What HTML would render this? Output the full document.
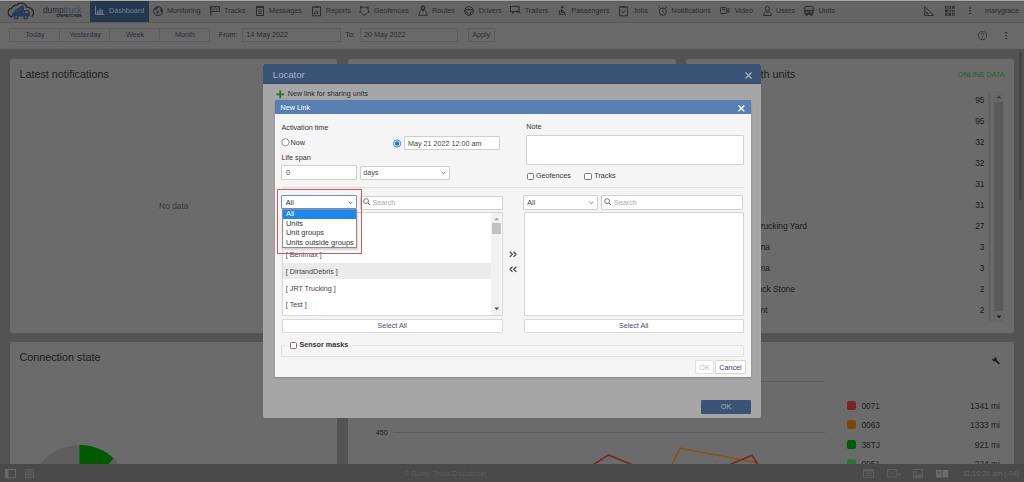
<!DOCTYPE html>
<html><head><meta charset="utf-8">
<style>
*{box-sizing:border-box;margin:0;padding:0}
html,body{width:1024px;height:482px;overflow:hidden;background:#535353;font-family:"Liberation Sans",sans-serif;position:relative}
.a{position:absolute}
.t{position:absolute;white-space:nowrap;line-height:1}
svg{position:absolute;overflow:visible}
</style></head><body>
<div class="a" style="left:0px;top:0px;width:1024px;height:22px;background:#646464;"></div>
<div class="a" style="left:0px;top:1px;width:1024px;height:1px;background:#5c5c5c;"></div>
<div class="a" style="left:0px;top:0px;width:1024px;height:1px;background:#a8aaa8;"></div>
<div class="a" style="left:0px;top:22px;width:1024px;height:1px;background:#585858;"></div>
<div class="a" style="left:90px;top:1px;width:59px;height:21px;background:#25374f;"></div>
<div class="t" style="left:167px;top:7.31px;font-size:7.2px;color:#2c2c2c;font-weight:400;">Monitoring</div>
<div class="t" style="left:224px;top:7.31px;font-size:7.2px;color:#2c2c2c;font-weight:400;">Tracks</div>
<div class="t" style="left:269px;top:7.31px;font-size:7.2px;color:#2c2c2c;font-weight:400;">Messages</div>
<div class="t" style="left:325.7px;top:7.31px;font-size:7.2px;color:#2c2c2c;font-weight:400;">Reports</div>
<div class="t" style="left:374px;top:7.31px;font-size:7.2px;color:#2c2c2c;font-weight:400;">Geofences</div>
<div class="t" style="left:432px;top:7.31px;font-size:7.2px;color:#2c2c2c;font-weight:400;">Routes</div>
<div class="t" style="left:478.8px;top:7.31px;font-size:7.2px;color:#2c2c2c;font-weight:400;">Drivers</div>
<div class="t" style="left:524.7px;top:7.31px;font-size:7.2px;color:#2c2c2c;font-weight:400;">Trailers</div>
<div class="t" style="left:571.5px;top:7.31px;font-size:7.2px;color:#2c2c2c;font-weight:400;">Passengers</div>
<div class="t" style="left:633px;top:7.31px;font-size:7.2px;color:#2c2c2c;font-weight:400;">Jobs</div>
<div class="t" style="left:671.6px;top:7.31px;font-size:7.2px;color:#2c2c2c;font-weight:400;">Notifications</div>
<div class="t" style="left:734.7px;top:7.31px;font-size:7.2px;color:#2c2c2c;font-weight:400;">Video</div>
<div class="t" style="left:776px;top:7.31px;font-size:7.2px;color:#2c2c2c;font-weight:400;">Users</div>
<div class="t" style="left:818.4px;top:7.31px;font-size:7.2px;color:#2c2c2c;font-weight:400;">Units</div>
<div class="t" style="left:985px;top:7.31px;font-size:7.2px;color:#2c2c2c;font-weight:400;">marygrace</div>
<div class="t" style="left:109px;top:7.31px;font-size:7.2px;color:#7a8494;font-weight:400;">Dashboard</div>
<svg style="left:95px;top:6px" width="10" height="9" viewBox="0 0 10 9"><path d="M0.5 0.3V8.4H9.5" stroke="#7a8494" stroke-width="0.9" fill="none"/><rect x="2.2" y="4.5" width="1.2" height="3.5" fill="#7a8494"/><rect x="4.4" y="2.5" width="1.2" height="5.5" fill="#7a8494"/><rect x="6.6" y="3.8" width="1.2" height="4.2" fill="#7a8494"/></svg>
<svg style="left:153px;top:5.5px" width="11" height="11" viewBox="0 0 11 11"><circle cx="5.1" cy="5.2" r="4.4" stroke="#2e2e2e" stroke-width="1.1" fill="none"/><path d="M1.5 3.2 C2.3 1.6 3.6 0.9 5 0.9 L5.8 1.6 L4.6 2.6 L3.8 3.6 L2.2 4 Z" fill="#2e2e2e"/><path d="M3.4 5.2 L5 4.6 L6 5.6 L5.4 7.2 L4.6 8.6 L4 7 Z" fill="#2e2e2e"/><path d="M7.6 2 C8.8 3 9.4 4.2 9.4 5.4 L8.4 6.4 L7.8 5.2 L7 4.2 Z" fill="#2e2e2e"/></svg>
<svg style="left:210px;top:6px" width="10" height="10" viewBox="0 0 10 10"><rect x="0.2" y="0" width="1.1" height="9.6" fill="#2e2e2e"/><rect x="0.8" y="0.5" width="8.6" height="5" stroke="#2e2e2e" stroke-width="0.9" fill="none"/><path d="M1.3 1h1.6v1.6h-1.6zM4.5 1h1.6v1.6h-1.6zM2.9 2.6h1.6v1.7h-1.6zM6.1 2.6h1.6v1.7h-1.6z" fill="#3e3e3e"/><path d="M7.7 1h1.2v1.6h-1.2z" fill="#3e3e3e"/></svg>
<svg style="left:256px;top:6px" width="8" height="10" viewBox="0 0 8 10"><rect x="0.5" y="0.5" width="7" height="9" stroke="#2e2e2e" stroke-width="1" fill="none"/><rect x="0.5" y="0.5" width="7" height="1.5" fill="#2e2e2e"/><path d="M2 4h4M2 5.8h4M2 7.6h4" stroke="#2e2e2e" stroke-width="0.8"/></svg>
<svg style="left:312px;top:6px" width="9" height="10" viewBox="0 0 9 10"><rect x="0.5" y="1" width="8" height="8.8" stroke="#2e2e2e" stroke-width="1" fill="none"/><rect x="2.5" y="0" width="4" height="1.6" fill="#2e2e2e"/><path d="M2.5 8V6.5M4 8V4.5M5.5 8V5.5" stroke="#2e2e2e" stroke-width="1"/></svg>
<svg style="left:359px;top:6px" width="11" height="10" viewBox="0 0 11 10"><path d="M2.2 1.1 L8.5 1.4 L9.9 5.8 L5.4 9.3 L1.1 5.8 Z" stroke="#2e2e2e" stroke-width="0.8" fill="none"/><rect x="1.2" y="0.2" width="2" height="2" fill="#2e2e2e"/><rect x="7.5" y="0.5" width="2" height="2" fill="#2e2e2e"/><path d="M9.9 4.6l1 2h-2z M5.4 8.3l1 1.5h-2z M1.1 4.6l1 2h-2z" fill="#2e2e2e"/></svg>
<svg style="left:418px;top:5px" width="11" height="11" viewBox="0 0 11 11"><path d="M5 0.6 C3.2 0.6 2.6 2 2.6 3 C2.6 4.3 5 7 5 7 C5 7 7.4 4.3 7.4 3 C7.4 2 6.8 0.6 5 0.6Z" fill="#2e2e2e"/><circle cx="5" cy="3" r="0.9" fill="#6a6a6a"/><path d="M2.5 5.2 L0.5 10.3 H9.5 L7.5 5.2" stroke="#2e2e2e" stroke-width="0.9" fill="none"/></svg>
<svg style="left:464px;top:6px" width="10" height="10" viewBox="0 0 10 10"><circle cx="5" cy="5" r="4.4" stroke="#2e2e2e" stroke-width="1" fill="none"/><path d="M1 4.2 Q5 2.6 9 4.2" stroke="#2e2e2e" stroke-width="1.2" fill="none"/><path d="M1.3 6 L3.5 6.2 L4 8.8 M8.7 6 L6.5 6.2 L6 8.8" stroke="#2e2e2e" stroke-width="1" fill="none"/></svg>
<svg style="left:510px;top:6px" width="11" height="9" viewBox="0 0 11 9"><rect x="0.5" y="0.5" width="8.5" height="5" stroke="#2e2e2e" stroke-width="1" fill="none"/><path d="M2 5.5 L3 7.5 L4 5.5 M5.5 5.5 H9.5 V7 H10.5" stroke="#2e2e2e" stroke-width="1" fill="none"/><rect x="6" y="4.5" width="3" height="2" fill="#2e2e2e"/></svg>
<svg style="left:558px;top:6px" width="9" height="10" viewBox="0 0 9 10"><circle cx="4.3" cy="1.3" r="1.2" fill="#2e2e2e"/><path d="M3.3 3 L3.5 6.5 H6.5 L7.5 9.5 M1.2 4 L1.8 8.3 H5.5 M3.5 4 L5.8 5.2" stroke="#2e2e2e" stroke-width="1.1" fill="none"/></svg>
<svg style="left:619px;top:6px" width="9" height="10" viewBox="0 0 9 10"><rect x="0.5" y="1" width="8" height="8.8" stroke="#2e2e2e" stroke-width="1" fill="none"/><rect x="2.5" y="0" width="4" height="1.6" fill="#2e2e2e"/><path d="M2.5 5.5 L4 7 L6.5 4" stroke="#2e2e2e" stroke-width="0.9" fill="none"/></svg>
<svg style="left:658px;top:6px" width="10" height="10" viewBox="0 0 10 10"><circle cx="4.8" cy="5.6" r="3.6" stroke="#2e2e2e" stroke-width="1" fill="none"/><path d="M4.8 3.5V5.8L6 7" stroke="#2e2e2e" stroke-width="0.8" fill="none"/><path d="M0.5 1.8 L2 0.5 M9.1 1.8 L7.6 0.5 M2 9.6 L2.8 8.6 M7.6 9.6 L6.8 8.6" stroke="#2e2e2e" stroke-width="1" fill="none"/></svg>
<svg style="left:720px;top:7px" width="10" height="7" viewBox="0 0 10 7"><rect x="0.5" y="0.5" width="6.2" height="6" rx="1" stroke="#2e2e2e" stroke-width="1" fill="none"/><rect x="1.8" y="1.8" width="3.6" height="1" fill="#2e2e2e"/><path d="M8 1.5 V5.5 M9 1 V6" stroke="#2e2e2e" stroke-width="0.8"/></svg>
<svg style="left:763px;top:6px" width="9" height="10" viewBox="0 0 9 10"><ellipse cx="4.5" cy="2.6" rx="2" ry="2.2" stroke="#2e2e2e" stroke-width="1" fill="none"/><path d="M0.6 9.5 C0.6 6.5 2.5 5.6 3.3 5.6 L4.5 7 L5.7 5.6 C6.5 5.6 8.4 6.5 8.4 9.5 Z" stroke="#2e2e2e" stroke-width="1" fill="none"/></svg>
<svg style="left:804px;top:6px" width="10" height="10" viewBox="0 0 10 10"><rect x="0.8" y="0.5" width="8.4" height="7.5" rx="1" stroke="#2e2e2e" stroke-width="1" fill="none"/><rect x="1" y="3.8" width="8" height="1.2" fill="#2e2e2e"/><rect x="1" y="5.5" width="8" height="3" fill="#2e2e2e"/><rect x="1.5" y="8" width="2" height="1.8" fill="#2e2e2e"/><rect x="6.5" y="8" width="2" height="1.8" fill="#2e2e2e"/><rect x="2" y="6.2" width="1.4" height="1" fill="#6a6a6a"/><rect x="6.6" y="6.2" width="1.4" height="1" fill="#6a6a6a"/><path d="M0 2.5V5M10 2.5V5" stroke="#2e2e2e" stroke-width="0.6"/></svg>
<svg style="left:924px;top:6px" width="10" height="10" viewBox="0 0 10 10"><path d="M0.7 0.5 V9.4 H9.5 Z" stroke="#2e2e2e" stroke-width="1" fill="none"/><path d="M0.7 4.5h1.2M0.7 6.5h1.2M2.8 6 L4.5 7.8 H2.8Z" stroke="#2e2e2e" stroke-width="0.7" fill="#2e2e2e"/></svg>
<svg style="left:945px;top:6px" width="10" height="10" viewBox="0 0 10 10"><rect x="0.4" y="0.4" width="1.9" height="1.9" stroke="#2e2e2e" stroke-width="0.7" fill="none"/><rect x="3.9" y="0.4" width="1.9" height="1.9" stroke="#2e2e2e" stroke-width="0.7" fill="none"/><rect x="7.0" y="0.0" width="2.6" height="2.6" fill="#2e2e2e"/><rect x="0.0" y="3.6" width="2.6" height="2.6" fill="#2e2e2e"/><rect x="3.9" y="4.0" width="1.9" height="1.9" stroke="#2e2e2e" stroke-width="0.7" fill="none"/><rect x="7.4" y="4.0" width="1.9" height="1.9" stroke="#2e2e2e" stroke-width="0.7" fill="none"/><rect x="0.0" y="7.2" width="2.6" height="2.6" fill="#2e2e2e"/><rect x="3.5" y="7.2" width="2.6" height="2.6" fill="#2e2e2e"/><rect x="7.4" y="7.6000000000000005" width="1.9" height="1.9" stroke="#2e2e2e" stroke-width="0.7" fill="none"/></svg>
<svg style="left:969px;top:7px" width="3" height="8" viewBox="0 0 3 8"><rect x="0.3" y="0.5" width="1.6" height="1.3" fill="#2e2e2e"/><rect x="0.3" y="3.1" width="1.6" height="1.3" fill="#2e2e2e"/><rect x="0.3" y="5.8" width="1.6" height="1.3" fill="#2e2e2e"/></svg>
<svg style="left:5px;top:1px" width="32" height="20" viewBox="0 0 32 20"><path d="M7.5 15.8 C4.8 15.5 3 13.5 3.2 11 C3.4 8.8 5 7.5 6.8 7.3 C7.8 5 9.8 3.8 11.8 4.2 C13 2.6 14.8 2 16.5 2.1 C19.2 2.3 21.2 4.3 21.6 6.5 C22.5 6.1 23.5 6.2 24.3 6.6 C27 7.5 28.6 10 28.4 12.5 C28.2 14 27.5 15 26.5 15.5" stroke="#222" stroke-width="1.2" fill="none"/><path d="M6.8 13 L10.5 8.6 L17.6 4.3 L19.2 5.2 L18.4 13 Z" fill="#26395a"/><path d="M19 8.9 H23.2 L25 11 V15.4 H7 V12.4 H19Z" fill="#26395a"/><rect x="20.3" y="10" width="2.6" height="2.2" fill="#55657a"/><circle cx="11.2" cy="16.2" r="2.4" fill="#26395a"/><circle cx="20.7" cy="16.2" r="2.4" fill="#26395a"/><circle cx="11.2" cy="16.2" r="0.9" fill="#6a6a6a"/><circle cx="20.7" cy="16.2" r="0.9" fill="#6a6a6a"/><path d="M9 11 L16 7 M8.5 12 L17 8" stroke="#44597a" stroke-width="0.4"/></svg>
<div class="t" style="left:43px;top:6.3px;font-size:8.3px;letter-spacing:-0.05px;color:#262a30">dump<span style="color:#34496a">truck</span></div>
<div class="t" style="left:56.5px;top:13.6px;font-size:4px;font-weight:700;color:#1e1e1e">DISPATCHER</div>
<div class="a" style="left:0px;top:23px;width:1024px;height:26px;background:#696969;"></div>
<div class="a" style="left:9px;top:27.5px;width:201px;height:14.5px;background:#696969;border:1px solid #5d5d5d;border-radius:1px"></div>
<div class="a" style="left:59px;top:28px;width:1px;height:14px;background:#5d5d5d;"></div>
<div class="a" style="left:109px;top:28px;width:1px;height:14px;background:#5d5d5d;"></div>
<div class="a" style="left:159px;top:28px;width:1px;height:14px;background:#5d5d5d;"></div>
<div class="t" style="left:-165px;width:400px;text-align:center;top:31.21px;font-size:7.2px;color:#2e2e3c;font-weight:400;">Today</div>
<div class="t" style="left:-115px;width:400px;text-align:center;top:31.21px;font-size:7.2px;color:#2e2e3c;font-weight:400;">Yesterday</div>
<div class="t" style="left:-65px;width:400px;text-align:center;top:31.21px;font-size:7.2px;color:#2e2e3c;font-weight:400;">Week</div>
<div class="t" style="left:-15px;width:400px;text-align:center;top:31.21px;font-size:7.2px;color:#2e2e3c;font-weight:400;">Month</div>
<div class="t" style="left:218.8px;top:31.41px;font-size:7.2px;color:#262626;font-weight:400;">From:</div>
<div class="a" style="left:242px;top:27.8px;width:99px;height:14.3px;background:#696969;border:1px solid #5d5d5d"></div>
<div class="t" style="left:246.5px;top:31.41px;font-size:7.2px;color:#2c2c2c;font-weight:400;">14 May 2022</div>
<div class="t" style="left:345.3px;top:31.41px;font-size:7.2px;color:#262626;font-weight:400;">To:</div>
<div class="a" style="left:360px;top:27.8px;width:98px;height:14.3px;background:#696969;border:1px solid #5d5d5d"></div>
<div class="t" style="left:364px;top:31.41px;font-size:7.2px;color:#2c2c2c;font-weight:400;">20 May 2022</div>
<div class="a" style="left:467.8px;top:27.8px;width:27px;height:14.3px;background:#696969;border:1px solid #5d5d5d;border-radius:1px"></div>
<div class="t" style="left:281.2px;width:400px;text-align:center;top:31.21px;font-size:7.2px;color:#2e2e3c;font-weight:400;">Apply</div>
<svg style="left:978px;top:31px" width="10" height="10" viewBox="0 0 10 10"><circle cx="4.5" cy="4.6" r="4.1" stroke="#2e2e2e" stroke-width="0.8" fill="none"/><path d="M3.1 3.5 C3.1 2.6 3.7 2.1 4.5 2.1 C5.3 2.1 5.9 2.6 5.9 3.4 C5.9 4.3 4.6 4.5 4.6 5.6" stroke="#2e2e2e" stroke-width="0.8" fill="none"/><rect x="4.1" y="6.3" width="0.9" height="0.9" fill="#2e2e2e"/></svg>
<svg style="left:1005px;top:32px" width="3" height="8" viewBox="0 0 3 8"><rect x="0.3" y="0" width="1.6" height="1.4" fill="#2a2a3a"/><rect x="0.3" y="2.9" width="1.6" height="1.4" fill="#2a2a3a"/><rect x="0.3" y="5.8" width="1.6" height="1.4" fill="#2a2a3a"/></svg>
<div class="a" style="left:10px;top:59px;width:327px;height:274px;background:#6b6b6b;border-radius:2px"></div>
<div class="a" style="left:348px;top:59px;width:328px;height:274px;background:#6b6b6b;border-radius:2px"></div>
<div class="a" style="left:686px;top:59px;width:328px;height:274px;background:#6b6b6b;border-radius:2px"></div>
<div class="a" style="left:10px;top:342px;width:327px;height:140px;background:#6b6b6b;border-radius:2px"></div>
<div class="a" style="left:348px;top:342px;width:666px;height:140px;background:#6b6b6b;border-radius:2px"></div>
<div class="a" style="left:1019px;top:52px;width:3px;height:148px;background:#464646;border-radius:1.5px"></div>
<div class="t" style="left:19.4px;top:69.06px;font-size:10.8px;color:#1d1d1d;font-weight:400;">Latest notifications</div>
<div class="t" style="left:159.1px;top:202.39px;font-size:8.4px;color:#393939;font-weight:400;">No data</div>
<div class="t" style="right:228.60000000000002px;top:68.86px;font-size:10.8px;color:#1d1d1d;font-weight:400;">Geofences with units</div>
<div class="t" style="left:957.8px;top:71.01px;font-size:7.2px;color:#2c5c2c;font-weight:400;">ONLINE DATA</div>
<div class="t" style="right:39.5px;top:96.39px;font-size:8.4px;color:#1a1a1a;font-weight:400;">95</div>
<div class="t" style="right:39.5px;top:117.39px;font-size:8.4px;color:#1a1a1a;font-weight:400;">95</div>
<div class="t" style="right:39.5px;top:138.39px;font-size:8.4px;color:#1a1a1a;font-weight:400;">32</div>
<div class="t" style="right:39.5px;top:159.39px;font-size:8.4px;color:#1a1a1a;font-weight:400;">32</div>
<div class="t" style="right:39.5px;top:180.39px;font-size:8.4px;color:#1a1a1a;font-weight:400;">31</div>
<div class="t" style="right:39.5px;top:201.39px;font-size:8.4px;color:#1a1a1a;font-weight:400;">31</div>
<div class="t" style="right:39.5px;top:222.39px;font-size:8.4px;color:#1a1a1a;font-weight:400;">27</div>
<div class="t" style="right:217.10000000000002px;top:222.39px;font-size:8.4px;color:#1a1a1a;font-weight:400;">Pinellas Trucking Yard</div>
<div class="t" style="right:39.5px;top:243.39px;font-size:8.4px;color:#1a1a1a;font-weight:400;">3</div>
<div class="t" style="right:254px;top:243.39px;font-size:8.4px;color:#1a1a1a;font-weight:400;">Lakeland Arena</div>
<div class="t" style="right:39.5px;top:264.39px;font-size:8.4px;color:#1a1a1a;font-weight:400;">3</div>
<div class="t" style="right:254px;top:264.39px;font-size:8.4px;color:#1a1a1a;font-weight:400;">Tampa Arena</div>
<div class="t" style="right:39.5px;top:285.39px;font-size:8.4px;color:#1a1a1a;font-weight:400;">2</div>
<div class="t" style="right:229.10000000000002px;top:285.39px;font-size:8.4px;color:#1a1a1a;font-weight:400;">Black Stone</div>
<div class="t" style="right:39.5px;top:306.39px;font-size:8.4px;color:#1a1a1a;font-weight:400;">2</div>
<div class="t" style="right:256.5px;top:306.39px;font-size:8.4px;color:#1a1a1a;font-weight:400;">Main Point</div>
<div class="a" style="left:988.3px;top:93px;width:2.5px;height:227.5px;background:#626262;"></div>
<div class="a" style="left:993.3px;top:91px;width:10.8px;height:231.3px;background:#676767;"></div>
<div class="a" style="left:994px;top:102px;width:9px;height:209px;background:#5a5a5a;"></div>
<svg style="left:995.5px;top:94.5px" width="6" height="4" viewBox="0 0 6 4"><path d="M0.5 3.2 L3 0.6 L5.5 3.2Z" fill="#3a3a3a"/></svg>
<svg style="left:995.5px;top:315px" width="6" height="4" viewBox="0 0 6 4"><path d="M0.5 0.6 L3 3.2 L5.5 0.6Z" fill="#1e1e1e"/></svg>
<div class="t" style="left:19.4px;top:352.16px;font-size:10.8px;color:#1d1d1d;font-weight:400;">Connection state</div>
<svg style="left:0;top:420px" width="200" height="44" viewBox="0 420 200 44"><circle cx="79.5" cy="495" r="50" fill="#5e5e5e"/><path d="M79.5 495 L79.5 445 A50 50 0 0 1 113.7 458.5 Z" fill="#005a00"/></svg>
<div class="t" style="left:375.8px;top:429.21px;font-size:7.2px;color:#1e1e1e;font-weight:400;">450</div>
<div class="a" style="left:393px;top:432px;width:432px;height:1px;background:#5c5c5c;"></div>
<div class="a" style="left:761px;top:381px;width:64px;height:1px;background:#5c5c5c;"></div>
<svg style="left:0;top:0" width="1024" height="464" viewBox="0 0 1024 464"><polyline points="593.7,464.5 608.4,455 631.8,464.5" stroke="#7c2620" stroke-width="1.6" fill="none"/><polyline points="672,464.5 680.2,448.1 753.5,461.9 757,464" stroke="#8c5212" stroke-width="1.6" fill="none"/><polyline points="730,464.5 752,455.2 758,464.5" stroke="#7c2620" stroke-width="1.6" fill="none"/></svg>
<svg style="left:990px;top:354px" width="12" height="12" viewBox="0 0 12 12"><path d="M5.6 6.2 L8.8 9.4" stroke="#1e1e1e" stroke-width="1.8" stroke-linecap="round"/><circle cx="4.6" cy="5.2" r="2.2" fill="#1e1e1e"/><path d="M2 3.6 L3.5 2.1 L5.2 3.8 L3.7 5.3Z" fill="#6b6b6b"/></svg>
<div class="a" style="left:847.2px;top:401.2px;width:9px;height:9px;background:#7a2420;border-radius:2px"></div>
<div class="t" style="left:861.4px;top:402.09px;font-size:8.4px;color:#1e1e1e;font-weight:400;">0071</div>
<div class="t" style="right:24.100000000000023px;top:402.09px;font-size:8.4px;color:#1e1e1e;font-weight:400;">1341 mi</div>
<div class="a" style="left:847.2px;top:420.4px;width:9px;height:9px;background:#7a460e;border-radius:2px"></div>
<div class="t" style="left:861.4px;top:421.39px;font-size:8.4px;color:#1e1e1e;font-weight:400;">0063</div>
<div class="t" style="right:24.100000000000023px;top:421.39px;font-size:8.4px;color:#1e1e1e;font-weight:400;">1333 mi</div>
<div class="a" style="left:847.2px;top:439.59999999999997px;width:9px;height:9px;background:#006000;border-radius:2px"></div>
<div class="t" style="left:861.4px;top:440.69px;font-size:8.4px;color:#1e1e1e;font-weight:400;">38TJ</div>
<div class="t" style="right:24.100000000000023px;top:440.69px;font-size:8.4px;color:#1e1e1e;font-weight:400;">921 mi</div>
<div class="a" style="left:847.2px;top:458.79999999999995px;width:9px;height:9px;background:#2a762a;border-radius:2px"></div>
<div class="t" style="left:861.4px;top:459.99px;font-size:8.4px;color:#1e1e1e;font-weight:400;">0051</div>
<div class="t" style="right:24.100000000000023px;top:459.99px;font-size:8.4px;color:#1e1e1e;font-weight:400;">224 mi</div>
<div class="a" style="left:0px;top:464px;width:1024px;height:18px;background:#4a4a4a;"></div>
<svg style="left:5px;top:469px" width="11" height="9" viewBox="0 0 11 9"><rect x="0.5" y="0.5" width="10" height="8.3" stroke="#6a6a6a" stroke-width="0.9" fill="none"/><rect x="0.5" y="0.5" width="3" height="8.3" fill="#6a6a6a"/></svg>
<svg style="left:25px;top:469px" width="9" height="9" viewBox="0 0 9 9"><path d="M0 0.5H9M0 3.2H9M0 5.9H9M0 8.6H9M0.5 0V9M3.2 0V9M5.9 0V9M8.5 0V9" stroke="#5f5f5f" stroke-width="0.9"/></svg>
<div class="t" style="left:404.3px;top:469.81px;font-size:7.2px;color:#5d5d5d;font-weight:400;">© Dump Truck Dispatcher</div>
<svg style="left:863px;top:469px" width="11" height="9" viewBox="0 0 11 9"><rect x="0.5" y="0.5" width="10" height="8.3" stroke="#5f5f5f" stroke-width="0.9" fill="none"/><rect x="0.5" y="0.5" width="10" height="2" fill="#5f5f5f"/><path d="M2 4.3H9M2 6.4H9" stroke="#5f5f5f" stroke-width="0.9"/></svg>
<svg style="left:886.5px;top:469px" width="15" height="9" viewBox="0 0 15 9"><rect x="0.5" y="0.5" width="9.5" height="7.5" stroke="#5f5f5f" stroke-width="0.9" fill="none"/><path d="M0.5 0.8 L5.2 4.8 L10 0.8" stroke="#5f5f5f" stroke-width="0.9" fill="none"/><path d="M9 5.5H13.5M12 4L14 5.5L12 7" stroke="#5f5f5f" stroke-width="0.9" fill="none"/></svg>
<svg style="left:912.5px;top:469px" width="10" height="9" viewBox="0 0 10 9"><rect x="0.5" y="0.5" width="9" height="8.3" stroke="#5f5f5f" stroke-width="0.9" fill="none"/><circle cx="3" cy="3" r="1" fill="#5f5f5f"/><path d="M1 8 L3.5 5 L5 6.5 L7 4 L9.5 8Z" fill="#5f5f5f"/></svg>
<svg style="left:936px;top:469.5px" width="13" height="8" viewBox="0 0 13 8"><rect x="0" y="0" width="5.6" height="7.5" fill="#6c6c6c"/><rect x="6.5" y="0" width="5.8" height="7.5" fill="#6c6c6c"/><path d="M1 2H4.5M1 4H4.5" stroke="#4d4d4d" stroke-width="0.8"/></svg>
<div class="t" style="left:962.7px;top:470.41px;font-size:7.2px;color:#666;font-weight:400;">11:10:20 am (-04)</div>
<div class="a" style="left:263px;top:64px;width:498px;height:354px;background:#a6a6a6;border-radius:2px"></div>
<div class="a" style="left:263px;top:64px;width:498px;height:20px;background:#3a5478;border-radius:2px 2px 0 0"></div>
<div class="a" style="left:263px;top:83px;width:498px;height:1px;background:#354a6a;"></div>
<div class="t" style="left:272.8px;top:69.87px;font-size:9.6px;color:#a7b1bf;font-weight:400;">Locator</div>
<svg style="left:744.5px;top:71.5px" width="7" height="7" viewBox="0 0 7 7"><path d="M0.5 0.5L6.5 6.5M6.5 0.5L0.5 6.5" stroke="#a9b3c0" stroke-width="1.25"/></svg>
<svg style="left:276px;top:90px" width="9" height="9" viewBox="0 0 9 9"><path d="M4.2 0.3V8.3M0.3 4.3H8.2" stroke="#2c6e2c" stroke-width="1.7"/></svg>
<div class="t" style="left:287.7px;top:90.41px;font-size:7.2px;color:#2a2a2a;font-weight:400;">New link for sharing units</div>
<div class="a" style="left:701px;top:399.5px;width:50px;height:14px;background:#3a5478;border-radius:1px"></div>
<div class="t" style="left:526px;width:400px;text-align:center;top:402.91px;font-size:7.2px;color:#a2acba;font-weight:400;">OK</div>
<div class="a" style="left:275px;top:100px;width:476px;height:277px;background:#f5f5f5;box-shadow:0 1px 2px rgba(0,0,0,0.2)"></div>
<div class="a" style="left:275px;top:100px;width:476px;height:14px;background:#5680b2;"></div>
<div class="t" style="left:280.5px;top:103.81px;font-size:7.2px;color:#fff;font-weight:400;">New Link</div>
<svg style="left:738px;top:104.5px" width="7" height="7" viewBox="0 0 7 7"><path d="M0.5 0.5L6.3 6.3M6.3 0.5L0.5 6.3" stroke="#fff" stroke-width="1.3"/></svg>
<div class="t" style="left:281.5px;top:124.11px;font-size:7.2px;color:#333;font-weight:400;">Activation time</div>
<svg style="left:280.5px;top:137.7px" width="9" height="9" viewBox="0 0 9 9"><circle cx="4.4" cy="4.3" r="3.6" stroke="#767676" stroke-width="0.8" fill="#fff"/></svg>
<div class="t" style="left:290.5px;top:138.66px;font-size:7.2px;color:#333;font-weight:400;">Now</div>
<svg style="left:392.5px;top:138.5px" width="9" height="9" viewBox="0 0 9 9"><circle cx="4.1" cy="4.5" r="3.6" stroke="#1a73e8" stroke-width="0.9" fill="#fff"/><circle cx="4.1" cy="4.5" r="2.2" fill="#1a73e8"/></svg>
<div class="a" style="left:403.5px;top:136.1px;width:96.2px;height:14.4px;background:#fff;border:1px solid #cfcfcf;border-radius:1px;"></div>
<div class="t" style="left:407.9px;top:139.71px;font-size:7.2px;color:#444;font-weight:400;">May 21 2022 12:00 am</div>
<div class="t" style="left:281.5px;top:153.91px;font-size:7.2px;color:#333;font-weight:400;">Life span</div>
<div class="a" style="left:281px;top:165px;width:75.5px;height:15px;background:#fff;border:1px solid #cfcfcf;border-radius:1px;"></div>
<div class="t" style="left:285.9px;top:169.11px;font-size:7.2px;color:#444;font-weight:400;">0</div>
<div class="a" style="left:360px;top:166.1px;width:89.5px;height:13.7px;background:#fff;border:1px solid #cfcfcf;border-radius:1px;"></div>
<div class="t" style="left:363.2px;top:168.71px;font-size:7.2px;color:#444;font-weight:400;">days</div>
<svg style="left:441.3px;top:171px" width="5" height="4" viewBox="0 0 5 4"><path d="M0.6 0.8L2.5 2.7L4.4 0.8" stroke="#555" stroke-width="0.8" fill="none"/></svg>
<div class="t" style="left:526.3px;top:123.01px;font-size:7.2px;color:#333;font-weight:400;">Note</div>
<div class="a" style="left:526px;top:135.2px;width:218px;height:29.6px;background:#fff;border:1px solid #cfcfcf;border-radius:1px;"></div>
<div class="a" style="left:526.5px;top:172.5px;width:7.3px;height:7.3px;border:0.8px solid #767676;border-radius:1.5px;background:#fff"></div>
<div class="t" style="left:536px;top:171.91px;font-size:7.2px;color:#333;font-weight:400;">Geofences</div>
<div class="a" style="left:584.3px;top:172.5px;width:7.3px;height:7.3px;border:0.8px solid #767676;border-radius:1.5px;background:#fff"></div>
<div class="t" style="left:594.3px;top:171.91px;font-size:7.2px;color:#333;font-weight:400;">Tracks</div>
<div class="a" style="left:281px;top:187px;width:462.5px;height:1px;background:#dedede;"></div>
<div class="a" style="left:359.7px;top:195.5px;width:143.0px;height:14.0px;background:#fff;border:1px solid #cfcfcf;border-radius:1px;"></div>
<svg style="left:362.8px;top:198.3px" width="8" height="8" viewBox="0 0 8 8"><circle cx="3.1" cy="3.1" r="2.4" stroke="#666" stroke-width="0.9" fill="none"/><path d="M4.9 4.9L6.9 6.9" stroke="#666" stroke-width="1"/></svg>
<div class="t" style="left:372.5px;top:198.71px;font-size:7.2px;color:#a8a8a8;font-weight:400;">Search</div>
<div class="a" style="left:281.5px;top:212px;width:221.0px;height:103.5px;background:#fff;border:1px solid #d6d6d6;border-radius:1px;"></div>
<div class="a" style="left:282.5px;top:263.1px;width:208.2px;height:16.4px;background:#ebebeb;"></div>
<div class="a" style="left:490.7px;top:213px;width:10.8px;height:101.5px;background:#f1f1f1;"></div>
<div class="a" style="left:492px;top:223.1px;width:8.8px;height:11.4px;background:#c1c1c1;"></div>
<svg style="left:493.5px;top:216.5px" width="6" height="4" viewBox="0 0 6 4"><path d="M0.3 3.3L2.7 0.5L5.1 3.3Z" fill="#a3a3a3"/></svg>
<svg style="left:493.5px;top:307px" width="6" height="4" viewBox="0 0 6 4"><path d="M0.3 0.5L2.7 3.3L5.1 0.5Z" fill="#505050"/></svg>
<div class="t" style="left:285.8px;top:251.01px;font-size:7.2px;color:#444;font-weight:400;">[ Benimax ]</div>
<div class="t" style="left:285.8px;top:267.81px;font-size:7.2px;color:#444;font-weight:400;">[ DirtandDebris ]</div>
<div class="t" style="left:285.8px;top:284.61px;font-size:7.2px;color:#444;font-weight:400;">[ JRT Trucking ]</div>
<div class="t" style="left:285.8px;top:301.01px;font-size:7.2px;color:#444;font-weight:400;">[ Test ]</div>
<div class="a" style="left:281.5px;top:319.3px;width:221.0px;height:13.4px;background:#fff;border:1px solid #dadada;border-radius:1px;"></div>
<div class="t" style="left:192.2px;width:400px;text-align:center;top:321.71px;font-size:7.2px;color:#4a4690;font-weight:400;">Select All</div>
<svg style="left:509px;top:250.5px" width="9" height="7" viewBox="0 0 9 7"><path d="M0.8 0.8L3.3 3.2L0.8 5.8M4.6 0.8L7.1 3.2L4.6 5.8" stroke="#444" stroke-width="1.2" fill="none"/></svg>
<svg style="left:509px;top:266.3px" width="9" height="7" viewBox="0 0 9 7"><path d="M3.5 0.8L1 3.2L3.5 5.8M7.3 0.8L4.8 3.2L7.3 5.8" stroke="#444" stroke-width="1.2" fill="none"/></svg>
<div class="a" style="left:523.2px;top:195.3px;width:74.7px;height:14.4px;background:#fff;border:1px solid #cfcfcf;border-radius:1px;"></div>
<div class="t" style="left:527.3px;top:198.91px;font-size:7.2px;color:#444;font-weight:400;">All</div>
<svg style="left:589.3px;top:200.8px" width="5" height="4" viewBox="0 0 5 4"><path d="M0.6 0.8L2.5 2.7L4.4 0.8" stroke="#555" stroke-width="0.8" fill="none"/></svg>
<div class="a" style="left:601.2px;top:195.3px;width:142.3px;height:14.4px;background:#fff;border:1px solid #cfcfcf;border-radius:1px;"></div>
<svg style="left:604px;top:198.3px" width="8" height="8" viewBox="0 0 8 8"><circle cx="3.1" cy="3.1" r="2.4" stroke="#666" stroke-width="0.9" fill="none"/><path d="M4.9 4.9L6.9 6.9" stroke="#666" stroke-width="1"/></svg>
<div class="t" style="left:614px;top:198.71px;font-size:7.2px;color:#a8a8a8;font-weight:400;">Search</div>
<div class="a" style="left:523.5px;top:212px;width:220.0px;height:103.5px;background:#fff;border:1px solid #d6d6d6;border-radius:1px;"></div>
<div class="a" style="left:523.5px;top:319.3px;width:220.0px;height:13.4px;background:#fff;border:1px solid #dadada;border-radius:1px;"></div>
<div class="t" style="left:433.70000000000005px;width:400px;text-align:center;top:321.71px;font-size:7.2px;color:#4a4690;font-weight:400;">Select All</div>
<div class="a" style="left:281.4px;top:345.4px;width:462.2px;height:11.4px;background:transparent;border:1px solid #e0e0e0;border-radius:1px"></div>
<div class="a" style="left:285.4px;top:343px;width:67px;height:4px;background:#f5f5f5;"></div>
<div class="a" style="left:290px;top:341.7px;width:7.3px;height:7.3px;border:0.8px solid #767676;border-radius:1.5px;background:#fff"></div>
<div class="t" style="left:299.4px;top:340.91px;font-size:7.2px;color:#333;font-weight:700;">Sensor masks</div>
<div class="a" style="left:695.3px;top:360.3px;width:18.4px;height:14.1px;background:#fff;border:1px solid #e2e2e2;border-radius:1px;"></div>
<div class="t" style="left:504.5px;width:400px;text-align:center;top:363.81px;font-size:7.2px;color:#bdbdbd;font-weight:400;">OK</div>
<div class="a" style="left:715.4px;top:360.3px;width:30.2px;height:14.1px;background:#fff;border:1px solid #d6d6d6;border-radius:1px;"></div>
<div class="t" style="left:530.5px;width:400px;text-align:center;top:363.81px;font-size:7.2px;color:#38366e;font-weight:400;">Cancel</div>
<div class="a" style="left:281px;top:195.3px;width:75.7px;height:13.7px;background:#fff;border:1px solid #5f97c6;border-radius:1px;"></div>
<div class="t" style="left:285.8px;top:198.91px;font-size:7.2px;color:#333;font-weight:400;">All</div>
<svg style="left:347.5px;top:200.6px" width="5" height="4" viewBox="0 0 5 4"><path d="M0.6 0.8L2.5 2.7L4.4 0.8" stroke="#555" stroke-width="0.8" fill="none"/></svg>
<div class="a" style="left:282px;top:209px;width:75px;height:39.3px;background:#fff;border:1px solid #8d8d8d;box-shadow:1px 2px 2px rgba(0,0,0,0.2)"></div>
<div class="a" style="left:283px;top:210px;width:73px;height:9px;background:#1e88f0;"></div>
<div class="t" style="left:286px;top:209.99px;font-size:7.45px;color:#fff;font-weight:400;">All</div>
<div class="t" style="left:286px;top:219.89px;font-size:7.45px;color:#333;font-weight:400;">Units</div>
<div class="t" style="left:286px;top:229.29px;font-size:7.45px;color:#333;font-weight:400;">Unit groups</div>
<div class="t" style="left:286px;top:238.89px;font-size:7.45px;color:#333;font-weight:400;">Units outside groups</div>
<div class="a" style="left:277px;top:189px;width:85px;height:65px;background:transparent;border:1px solid #e4525a"></div>
</body></html>
